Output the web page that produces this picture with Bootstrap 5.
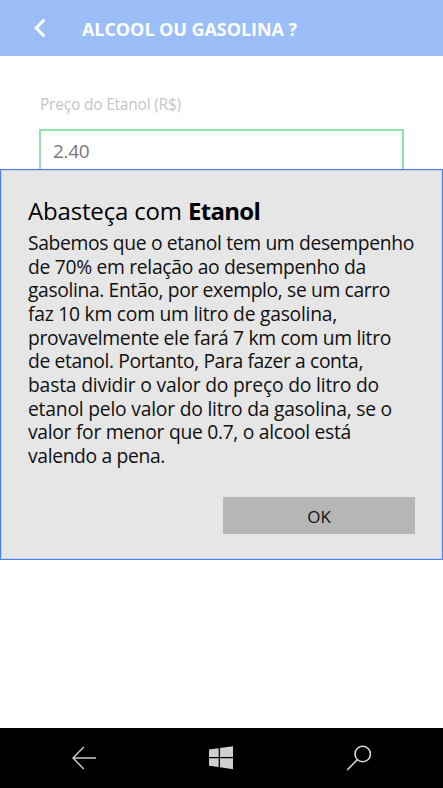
<!DOCTYPE html>
<html lang="pt-BR">
<head>
    <meta charset="UTF-8">
    <meta name="viewport" content="width=device-width, initial-scale=1.0">
    <title>Alcool ou Gasolina ?</title>
    <link rel="stylesheet" href="https://cdn.jsdelivr.net/npm/bootstrap@5.3.0/dist/css/bootstrap.min.css">
    <style>
        body {
            font-family: "Open Sans", "Noto Sans", sans-serif;
            height: 788px;
            overflow: hidden;
        }
        .app-header {
            background-color: #9bbef9;
            height: 56px;
            padding-left: 34px;
        }
        .app-title {
            font-size: 18px;
            font-weight: 700;
            line-height: 24px;
            margin-left: 35px;
            margin-top: 2px;
        }
        .form-area {
            padding: 36px 39px 0 39px;
        }
        .price-label {
            color: #c6c6c6;
            font-size: 15.5px;
            line-height: 24px;
            margin-bottom: 13px;
            padding-left: 1px;
        }
        .price-input {
            border: 2px solid #93e3a8;
            color: #777;
            font-size: 19px;
            letter-spacing: -.3px;
            height: 44px;
            padding: 0 12px;
        }
        .price-input:focus {
            border-color: #93e3a8;
            box-shadow: none;
        }
        .dialog-box {
            top: 169px;
            height: 391px;
            background-color: #e6e6e6;
            border: 1px solid #4a83e4;
            box-shadow: inset 0 0 0 1px #c3d5f3;
            padding: 25px 27px 25px;
            color: #000;
        }
        .dialog-title {
            font-size: 24px;
            line-height: 32px;
            margin-bottom: 4px;
        }
        .dialog-text {
            font-size: 19.3px;
            line-height: 23.65px;
            color: #111;
            white-space: nowrap;
        }
        .dialog-text .fit {
            display: block;
            width: fit-content;
        }
        .btn-ok {
            background-color: #b6b6b6;
            color: #111;
            width: 192px;
            height: 37px;
            font-size: 17px;
            padding: 2px 0 0;
        }
        .phone-bar {
            background-color: #000;
            height: 60px;
        }
    </style>
</head>
<body class="d-flex flex-column bg-white position-relative">
    <header class="app-header d-flex align-items-center text-white">
        <svg width="13" height="20" viewBox="0 0 13 20" fill="none" stroke="#fff" stroke-width="3"><path d="M10.3 1.8 2.2 10l8.1 8.2"/></svg>
        <h1 class="app-title mb-0"><span class="fit" data-width="215">ALCOOL OU GASOLINA ?</span></h1>
    </header>

    <main class="form-area flex-grow-1">
        <label for="etanol" class="price-label d-block"><span class="fit" data-width="141">Preço do Etanol (R$)</span></label>
        <input type="text" id="etanol" class="price-input form-control rounded-0" value="2.40">
    </main>

    <div class="dialog-box position-absolute start-0 w-100 d-flex flex-column" role="dialog" aria-labelledby="dialogTitle">
        <h2 id="dialogTitle" class="dialog-title fw-normal"><span class="fit" data-width="160">Abasteça com </span><b class="fit" data-width="72">Etanol</b></h2>
        <p class="dialog-text mb-0">
            <span class="fit" data-width="386">Sabemos que o etanol tem um desempenho</span>
            <span class="fit" data-width="338">de 70% em relação ao desempenho da</span>
            <span class="fit" data-width="362">gasolina. Então, por exemplo, se um carro</span>
            <span class="fit" data-width="309">faz 10 km com um litro de gasolina,</span>
            <span class="fit" data-width="363">provavelmente ele fará 7 km com um litro</span>
            <span class="fit" data-width="335">de etanol. Portanto, Para fazer a conta,</span>
            <span class="fit" data-width="351">basta dividir o valor do preço do litro do</span>
            <span class="fit" data-width="364">etanol pelo valor do litro da gasolina, se o</span>
            <span class="fit" data-width="323">valor for menor que 0.7, o alcool está</span>
            <span class="fit" data-width="137">valendo a pena.</span>
        </p>
        <button type="button" class="btn-ok btn rounded-0 border-0 mt-auto ms-auto">OK</button>
    </div>

    <nav class="phone-bar d-flex align-items-center justify-content-between px-5" aria-label="Telefone">
        <svg class="ms-4" width="25" height="24" viewBox="0 0 25 24" fill="none" stroke="#c8c8c8" stroke-width="1.5"><path d="M24 12H1M11.8 1 1 12l10.8 11"/></svg>
        <svg width="26" height="24" viewBox="0 0 26 24" fill="#cfcfcf"><path d="M0 3.5 9.7 2.3V11H0zM11 2.1 24 .2V11H11zM0 12.3h9.7V21L0 19.8zM11 12.3h13v11L11 21.3z"/></svg>
        <svg class="me-4" width="25" height="26" viewBox="0 0 25 26" fill="none" stroke="#d4d4d4" stroke-width="1.6"><circle cx="16.7" cy="9" r="7.7"/><path d="M11.2 14.8 1.2 25"/></svg>
    </nav>

    <script src="https://cdn.jsdelivr.net/npm/bootstrap@5.3.0/dist/js/bootstrap.bundle.min.js"></script>
    <script>
        // Spread the letters so each line fills its width
        document.querySelectorAll('.fit').forEach(line => {
            const extra = Number(line.dataset.width) - line.getBoundingClientRect().width;
            line.style.letterSpacing = `${extra / line.textContent.length}px`;
        });
    </script>
</body>
</html>
